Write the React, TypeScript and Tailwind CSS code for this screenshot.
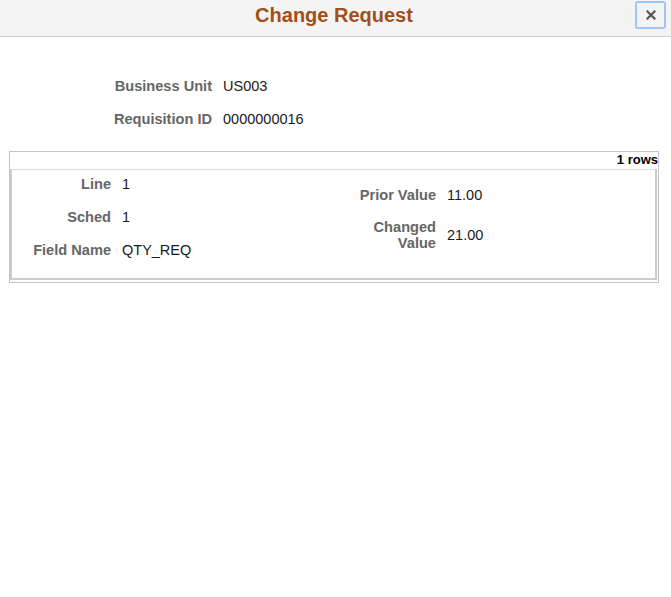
const font = { fontFamily: '"Liberation Sans", Arial, sans-serif' };

function Label({ children, className = "" }: { children: React.ReactNode; className?: string }) {
    return <div className={`text-right font-bold text-[14.6px] text-[#666666] leading-[16px] ${className}`}>{children}</div>;
}

function Value({ children }: { children: React.ReactNode }) {
    return <div className="text-[14.5px] text-[#1a1a1a] leading-[16px]">{children}</div>;
}

export default function App() {
    return (
        <div className="w-[671px] h-[597px] bg-white" style={font}>
            {/* Header */}
            <div className="relative h-[37px] bg-[#f4f4f4] border-b border-[#cfcfcf] flex items-center justify-center">
                <h1 className="text-[20px] font-bold text-[#a14f18] leading-[24px] -mt-[7px] ml-[-3px]">Change Request</h1>
                <button className="absolute right-[5px] top-[1px] w-[31px] h-[28px] rounded-[3px] border-2 border-[#a3c3fb] flex items-center justify-center">
                    <svg width="10" height="10" viewBox="0 0 10 10">
                        <path d="M1.5 1.5 L8.5 8.5 M8.5 1.5 L1.5 8.5" stroke="#555555" strokeWidth="2.2" strokeLinecap="square" />
                    </svg>
                </button>
            </div>

            {/* Top fields */}
            <div className="grid grid-cols-[212px_auto] gap-x-[11px] pt-[32px]">
                <Label className="h-[33px] flex items-center justify-end">Business Unit</Label>
                <div className="h-[33px] flex items-center"><Value>US003</Value></div>
                <Label className="h-[33px] flex items-center justify-end">Requisition ID</Label>
                <div className="h-[33px] flex items-center"><Value>0000000016</Value></div>
            </div>

            {/* Grid */}
            <div className="ml-[9px] mt-[16px] w-[650px] border border-[#c4c4c4] pb-[2px]">
                <div className="h-[17px] flex items-center justify-end text-[13px] font-bold text-black leading-[15px] pb-[2px]">1 rows</div>
                <div className="mr-[1px] border-t border-[#dcdcdc] border-l-2 border-r-2 border-b-2 border-l-[#cccccc] border-r-[#cccccc] border-b-[#cccccc] flex pb-[14px]">
                    <div className="w-[334px] grid grid-cols-[99px_auto] gap-x-[11px] gap-y-[5px]">
                        <Label className="h-[28px] flex items-center justify-end">Line</Label>
                        <div className="h-[28px] flex items-center"><Value>1</Value></div>
                        <Label className="h-[28px] flex items-center justify-end">Sched</Label>
                        <div className="h-[28px] flex items-center"><Value>1</Value></div>
                        <Label className="h-[28px] flex items-center justify-end">Field Name</Label>
                        <div className="h-[28px] flex items-center"><Value>QTY_REQ</Value></div>
                    </div>
                    <div className="pt-[11px] grid grid-cols-[90px_auto] gap-x-[11px] gap-y-[10px] content-start">
                        <Label className="h-[28px] flex items-center justify-end">Prior Value</Label>
                        <div className="h-[28px] flex items-center"><Value>11.00</Value></div>
                        <Label>Changed Value</Label>
                        <div className="flex items-center"><Value>21.00</Value></div>
                    </div>
                </div>
            </div>
        </div>
    );
}
